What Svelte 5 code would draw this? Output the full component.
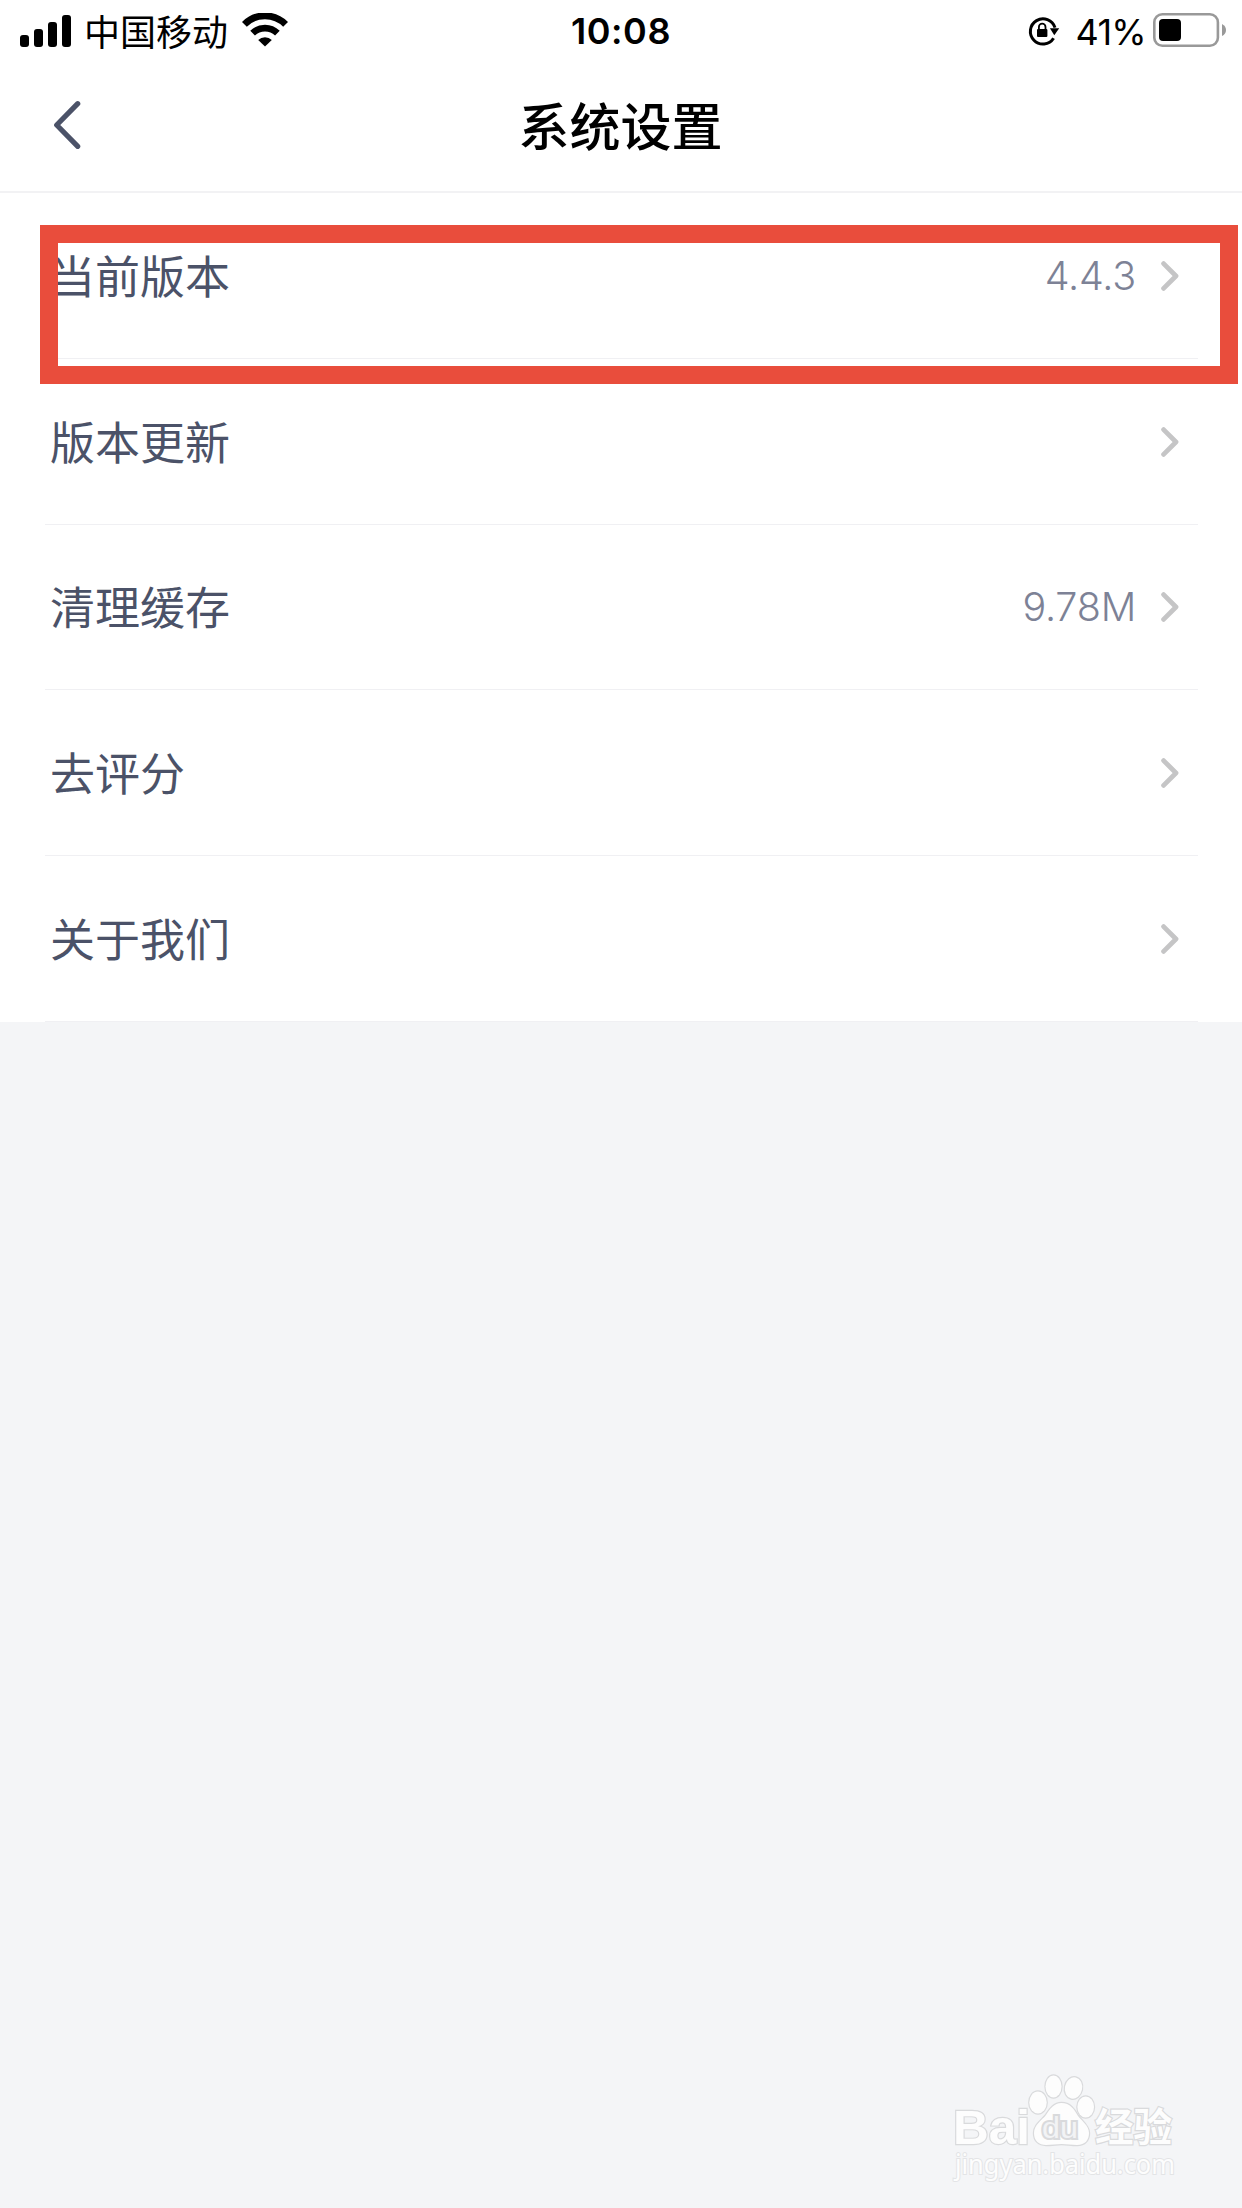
<script>
  const rows = [
    { label: '当前版本', value: '4.4.3', marked: true },
    { label: '版本更新' },
    { label: '清理缓存', value: '9.78M' },
    { label: '去评分' },
    { label: '关于我们' }
  ];
</script>

<div class="screen">
  <div class="status">
    <div class="side">
      <svg class="signal" width="52" height="34" viewBox="0 0 52 34">
        <rect x="0" y="21" width="9" height="12" rx="3" />
        <rect x="14" y="15" width="9" height="18" rx="3" />
        <rect x="28" y="8" width="9" height="25" rx="3" />
        <rect x="42" y="1" width="9" height="32" rx="3" />
      </svg>
      <span class="carrier">中国移动</span>
      <svg class="wifi" width="46" height="34" viewBox="0 0 46 34">
        <path d="M2.4 11.4a29 29 0 0 1 41.2 0" fill="none" stroke="#000" stroke-width="6.8" />
        <path d="M10.600 20.200a17.600 17.600 0 0 1 24.800 0" fill="none" stroke="#000" stroke-width="6.6" />
        <path d="M16.2 27a9.600 9.600 0 0 1 13.600 0L23 33.500z" />
      </svg>
    </div>
    <span class="time">10:08</span>
    <div class="side end">
      <svg width="32" height="32" viewBox="0 0 32 32">
        <path d="M25.6 23.2A12.6 12.6 0 1 1 27 12.6" fill="none" stroke="#000" stroke-width="3" />
        <path d="M21.9 13.2h9.3l-4.9 7z" />
        <rect x="9" y="14" width="10.4" height="8" rx="1" />
        <path d="M10.9 14.4v-2.5a3.3 3.3 0 0 1 6.6 0v2.5" fill="none" stroke="#000" stroke-width="1.8" />
      </svg>
      <span class="percent">41%</span>
      <svg class="battery" width="73" height="34" viewBox="0 0 73 34">
        <rect x="1.3" y="1.3" width="63.6" height="31.4" rx="8" fill="none" stroke="#999" stroke-width="2.6" />
        <rect x="6" y="6" width="22" height="22" rx="4" />
        <path d="M69 11q4 2 4 6t-4 6z" fill="#999" />
      </svg>
    </div>
  </div>

  <header>
    <svg class="back" width="28" height="50" viewBox="0 0 28 50">
      <path d="M24.7 3.7L3.7 25l21 21.3" fill="none" stroke="#4b5268" stroke-width="5.2" stroke-linecap="round" stroke-linejoin="round" />
    </svg>
    <h1>系统设置</h1>
  </header>

  <ul>
    {#each rows as row}
      <li class:marked={row.marked}>
        <span class="label">{row.label}</span>
        {#if row.value}<span class="value">{row.value}</span>{/if}
        <svg width="18" height="30" viewBox="0 0 18 30">
          <path d="M2.6 2.6L15 15 2.6 27.4" fill="none" stroke="#c5c5c6" stroke-width="4.8" stroke-linecap="round" stroke-linejoin="round" />
        </svg>
      </li>
    {/each}
  </ul>

  <svg class="watermark" width="270" height="150" viewBox="0 0 270 150">
    <g class="ink">
      <text x="23" y="93.500" font-size="49" font-weight="700" textLength="77" lengthAdjust="spacingAndGlyphs">Bai</text>
      <ellipse cx="108" cy="52.5" rx="8.7" ry="11" />
      <ellipse cx="123.5" cy="36.5" rx="8" ry="11" />
      <ellipse cx="143.5" cy="38" rx="8.6" ry="10.8" transform="rotate(12 143.5 38)" />
      <ellipse cx="155.7" cy="57" rx="8.3" ry="10.5" />
      <path d="M131.500 53C124 53 120 59 116 65C112 70 104 75 104 83C104 91 109 95 116 95C122 95 127 94 131.500 94C137 94 141 95 147 95C155 95 159 90 159 83C159 76 152 71 148 66C144 59 140 53 131.500 53z" />
      <text class="du" x="112" y="88" font-size="30" textLength="36" lengthAdjust="spacingAndGlyphs">du</text>
      <text class="cjk" x="165" y="91" font-size="39" font-weight="700" textLength="77" lengthAdjust="spacingAndGlyphs">经验</text>
      <text class="url" x="25" y="123.500" font-size="26.500" textLength="220" lengthAdjust="spacingAndGlyphs">jingyan.baidu.com</text>
    </g>
  </svg>
</div>

<style>
  :global(body) {
    background: #f4f5f7;
  }
  .screen {
    position: relative;
    width: 1242px;
    height: 2208px;
    overflow: hidden;
    background: #f4f5f7;
    font-family: Inter, 'Noto Sans CJK SC', sans-serif;
  }
  svg {
    display: block;
    flex: none;
  }
  .status {
    display: grid;
    grid-template-columns: 1fr auto 1fr;
    align-items: center;
    height: 62px;
    padding: 0 16px 0 20px;
    background: #fff;
    color: #000;
    line-height: 1;
  }
  .side {
    display: flex;
    align-items: center;
  }
  .end {
    justify-content: flex-end;
  }
  .signal {
    margin-right: 12px;
  }
  .carrier {
    margin-top: -3px;
    font-family: 'Noto Sans CJK SC', sans-serif;
    font-size: 36px;
  }
  .wifi {
    margin: -3px 0 0 14px;
  }
  .time {
    font-size: 36px;
    font-weight: 600;
    letter-spacing: 0.6px;
    transform: translateX(-2px);
  }
  .percent {
    margin: 1px 7px 0 16px;
    font-size: 36px;
    letter-spacing: -0.7px;
  }
  .battery {
    margin-top: -2px;
  }
  header {
    display: grid;
    grid-template-columns: 1fr auto 1fr;
    align-items: center;
    box-sizing: border-box;
    height: 131px;
    padding: 0 53px;
    border-bottom: 2px solid #f2f2f4;
    background: #fff;
  }
  .back {
    margin-top: -3px;
  }
  h1 {
    margin: -4px 0 0 -1px;
    font-family: 'Noto Sans CJK SC', sans-serif;
    font-size: 51px;
    font-weight: 500;
    line-height: 1;
    color: #000;
  }
  ul {
    margin: 0;
    padding: 0.3px 44px 0 45px;
    list-style: none;
    background: #fff;
  }
  li {
    position: relative;
    display: flex;
    align-items: center;
    box-sizing: border-box;
    height: 165.67px;
    padding: 1px 19px 0 5px;
    border-bottom: 1.5px solid #f0f0f3;
    line-height: 1;
  }
  .marked::after {
    content: '';
    position: absolute;
    top: 32px;
    left: -5px;
    box-sizing: border-box;
    width: 1198px;
    height: 159px;
    border: 18px solid #e94d3c;
    z-index: 1;
  }
  .label {
    flex: 1;
    margin-top: -3px;
    font-family: 'Noto Sans CJK SC', sans-serif;
    font-size: 45px;
    color: #4b5268;
  }
  .value {
    margin: 1px 25px 0 0;
    font-size: 39.5px;
    font-weight: 300;
    letter-spacing: -0.2px;
    color: #7d8296;
  }
  .watermark {
    position: absolute;
    left: 930px;
    top: 2050px;
  }
  .ink {
    fill: #fdfdfd;
    stroke: #d9dadc;
    stroke-width: 2.4px;
    paint-order: stroke;
    font-family: 'Liberation Sans', sans-serif;
  }
  .ink .du {
    fill: #f2f3f5;
    stroke-width: 4px;
  }
  .ink .cjk {
    font-family: 'Noto Sans CJK SC', sans-serif;
  }
  .ink .url {
    stroke: #e3e4e6;
    stroke-width: 2px;
    font-family: 'Noto Sans', sans-serif;
  }
</style>
